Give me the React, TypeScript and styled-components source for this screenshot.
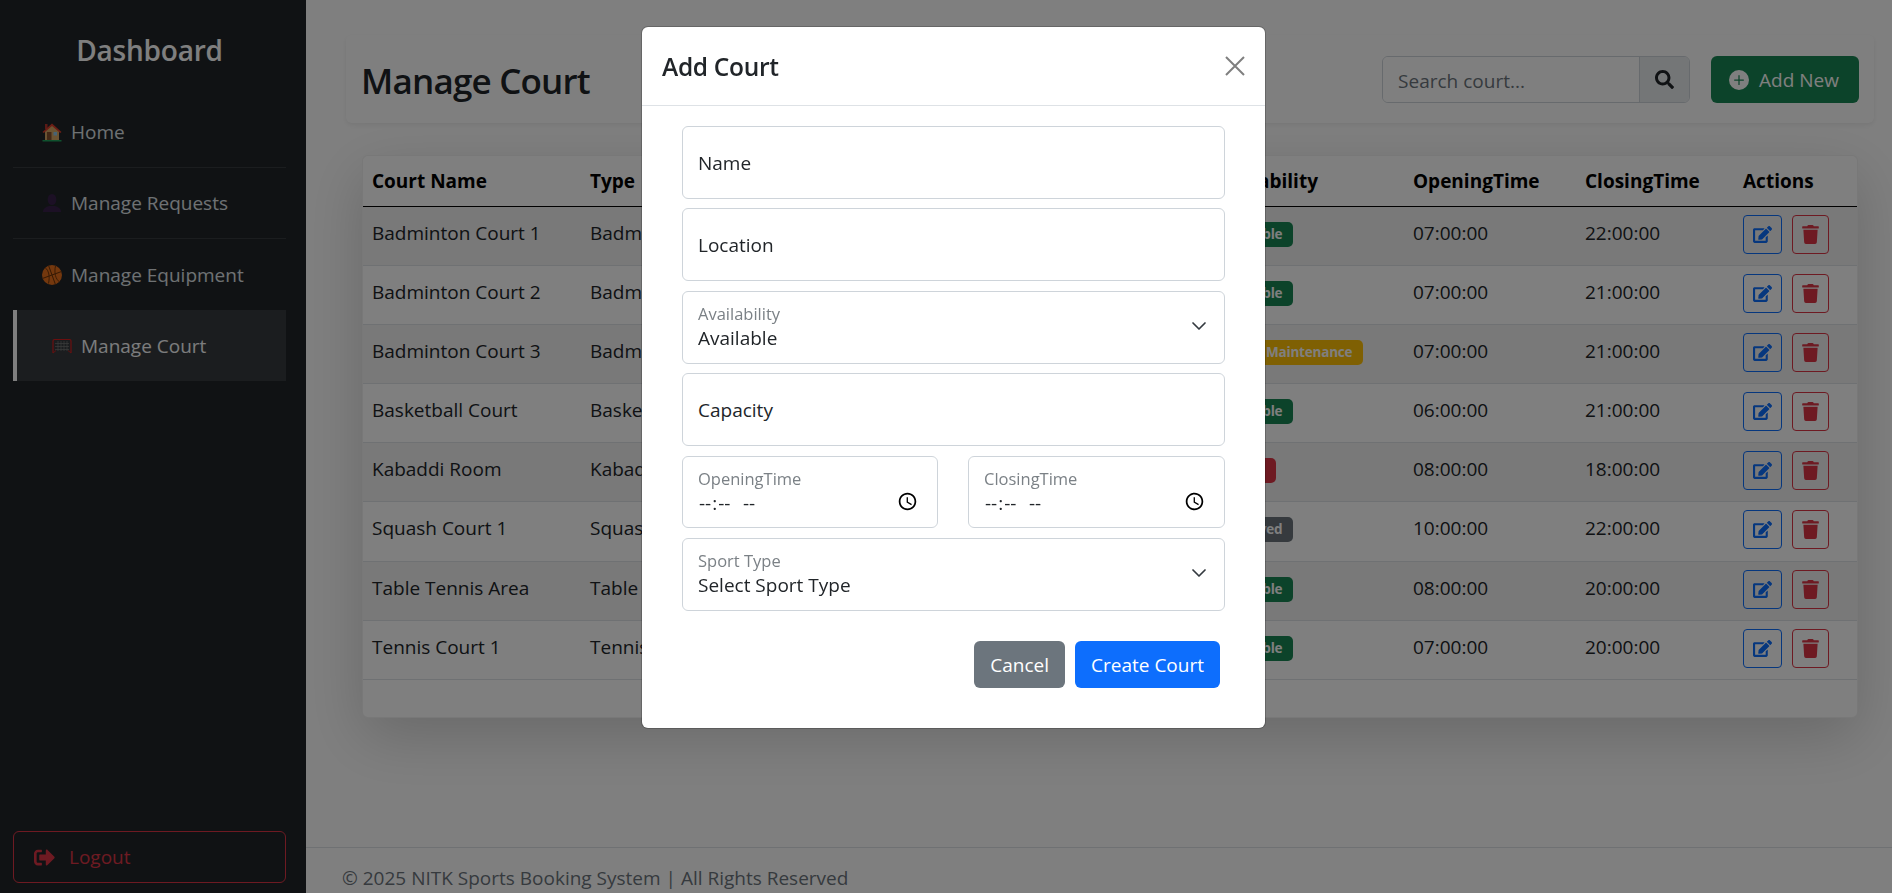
import React, { FC } from "react";
import styled, { createGlobalStyle } from "styled-components";
import { BsPlusCircleFill } from "react-icons/bs";
import { FaEdit, FaSearch, FaSignOutAlt, FaTrash } from "react-icons/fa";

type BadgeKind = "success" | "warning" | "danger" | "secondary";

type Court = {
  name: string;
  type: string;
  status: string;
  kind: BadgeKind;
  opening: string;
  closing: string;
};

const courts: Court[] = [
  { name: "Badminton Court 1", type: "Badminton", status: "Available", kind: "success", opening: "07:00:00", closing: "22:00:00" },
  { name: "Badminton Court 2", type: "Badminton", status: "Available", kind: "success", opening: "07:00:00", closing: "21:00:00" },
  { name: "Badminton Court 3", type: "Badminton", status: "Under Maintenance", kind: "warning", opening: "07:00:00", closing: "21:00:00" },
  { name: "Basketball Court", type: "Basketball", status: "Available", kind: "success", opening: "06:00:00", closing: "21:00:00" },
  { name: "Kabaddi Room", type: "Kabaddi", status: "Closed", kind: "danger", opening: "08:00:00", closing: "18:00:00" },
  { name: "Squash Court 1", type: "Squash", status: "Reserved", kind: "secondary", opening: "10:00:00", closing: "22:00:00" },
  { name: "Table Tennis Area", type: "Table Tennis", status: "Available", kind: "success", opening: "08:00:00", closing: "20:00:00" },
  { name: "Tennis Court 1", type: "Tennis", status: "Available", kind: "success", opening: "07:00:00", closing: "20:00:00" },
];

const badgeColors: Record<BadgeKind, string> = {
  success: "#198754",
  warning: "#ffc107",
  danger: "#dc3545",
  secondary: "#6c757d",
};

const GlobalStyle = createGlobalStyle`
  html, body {
    margin: 0;
    height: 100%;
    overflow: hidden;
  }
  body {
    font-family: "Open Sans", "Noto Sans", sans-serif;
    font-size: 19px;
    color: #212529;
    background: #fff;
  }
  * {
    box-sizing: border-box;
  }
`;

const Page = styled.div`
  display: flex;
  height: 893px;
  overflow: hidden;
`;

const Sidebar = styled.aside`
  flex: 0 0 306px;
  display: flex;
  flex-direction: column;
  padding: 0 20px 10px 13px;
  background: #212529;
`;

const Brand = styled.h1`
  margin: 0;
  height: 97px;
  padding-top: 31px;
  font-size: 28px;
  line-height: 38px;
  font-weight: 600;
  letter-spacing: -0.2px;
  text-align: center;
  color: #fff;
`;

const NavItem = styled.a<{ $active?: boolean }>`
  display: flex;
  align-items: center;
  gap: 9px;
  height: 71px;
  padding-left: ${(p) => (p.$active ? "35px" : "29px")};
  font-size: 19px;
  color: ${(p) => (p.$active ? "#f8f9fa" : "#dee2e6")};
  border-left: ${(p) => (p.$active ? "4px solid #fff" : "0")};
  border-bottom: ${(p) => (p.$active ? "0" : "1px solid rgba(255, 255, 255, 0.1)")};
  background: ${(p) => (p.$active ? "rgba(255, 255, 255, 0.1)" : "transparent")};

  &:nth-of-type(3) {
    border-bottom: 0;
  }
`;

const LogoutButton = styled.button`
  display: flex;
  align-items: center;
  gap: 14px;
  width: 100%;
  height: 52px;
  margin-top: auto;
  padding: 0 0 0 20px;
  font: inherit;
  font-size: 19px;
  color: #dc3545;
  background: transparent;
  border: 1px solid #dc3545;
  border-radius: 6px;
`;

const Main = styled.main`
  flex: 1;
  display: flex;
  flex-direction: column;
  min-width: 0;
`;

const Content = styled.div`
  flex: 1;
  padding: 35px 18px 0 40px;
`;

const TopBar = styled.header`
  display: flex;
  align-items: center;
  justify-content: space-between;
  height: 88px;
  padding: 0 15px 0 15px;
  background: #fff;
  border-radius: 6px;
  box-shadow: 0 2px 5px rgba(0, 0, 0, 0.075);
`;

const PageTitle = styled.h2`
  margin: 0;
  padding-top: 3px;
  font-size: 35px;
  line-height: 46px;
  font-weight: 600;
  letter-spacing: -0.8px;
`;

const TopActions = styled.div`
  display: flex;
  align-items: center;
  gap: 21px;
`;

const SearchGroup = styled.div`
  display: flex;
  width: 308px;
  height: 47px;
  border: 1px solid #ced4da;
  border-radius: 6px;
  overflow: hidden;
`;

const SearchInput = styled.input`
  flex: 1;
  min-width: 0;
  padding: 3px 15px 0;
  font: inherit;
  font-size: 19px;
  border: 0;
  outline: 0;
  background: #fff;

  &::placeholder {
    color: #6c757d;
  }
`;

const SearchAddon = styled.span`
  flex: 0 0 50px;
  display: flex;
  align-items: center;
  justify-content: center;
  font-size: 19px;
  color: #212529;
  background: #e9ecef;
  border-left: 1px solid #ced4da;
`;

const AddButton = styled.button`
  display: flex;
  align-items: center;
  gap: 10px;
  height: 47px;
  padding: 2px 20px 0 18px;
  font: inherit;
  font-size: 19px;
  color: #fff;
  background: #198754;
  border: 0;
  border-radius: 6px;
`;

const TableCard = styled.section`
  margin: 32px 16px 0 16px;
  height: 563px;
  border-radius: 6px;
  background: #fff;
  overflow: hidden;
  border: 1px solid rgba(0, 0, 0, 0.06);
  box-shadow: 0 19px 58px rgba(0, 0, 0, 0.175);
`;

const Table = styled.table`
  width: 100%;
  table-layout: fixed;
  border-collapse: collapse;
`;

const HeadCell = styled.th<{ $width?: number }>`
  width: ${(p) => (p.$width ? `${p.$width}px` : "auto")};
  height: 50px;
  padding: 0 9px;
  font-size: 19px;
  font-weight: 700;
  text-align: left;
  color: #000;
  border-bottom: 1px solid #000;
`;

const Row = styled.tr`
  &:nth-child(odd) td {
    background: rgba(0, 0, 0, 0.05);
  }
`;

const Cell = styled.td`
  height: 59.2px;
  padding: 14px 9px 0;
  vertical-align: top;
  font-size: 19px;
  line-height: 24px;
  white-space: nowrap;
  overflow: hidden;
  border-bottom: 1px solid #dee2e6;
`;

const Badge = styled.span<{ $kind: BadgeKind }>`
  display: inline-block;
  height: 25px;
  padding: 0 11px;
  font-size: 13.5px;
  font-weight: 700;
  line-height: 25px;
  letter-spacing: -0.2px;
  vertical-align: top;
  color: #fff;
  background: ${(p) => badgeColors[p.$kind]};
  border-radius: 5px;
  transform: translateY(1px);
`;

const ActionCell = styled(Cell)`
  padding-top: 8px;
`;

const ActionList = styled.div`
  display: flex;
  gap: 10px;
`;

const IconButton = styled.button<{ $color: string; $width: number }>`
  display: flex;
  align-items: center;
  justify-content: center;
  width: ${(p) => p.$width}px;
  height: 39px;
  padding: 0;
  font-size: 19px;
  color: ${(p) => p.$color};
  background: transparent;
  border: 1px solid ${(p) => p.$color};
  border-radius: 4px;
`;

const Footer = styled.footer`
  flex: 0 0 46px;
  padding: 15px 36px 0;
  font-size: 19px;
  line-height: 30px;
  white-space: nowrap;
  color: #6c757d;
  border-top: 1px solid #dee2e6;
`;

const Backdrop = styled.div`
  position: fixed;
  inset: 0;
  display: flex;
  justify-content: center;
  align-items: flex-start;
  padding: 27px 0 0 15px;
  background: rgba(0, 0, 0, 0.5);
`;

const Modal = styled.div`
  width: 623px;
  height: 701px;
  color: #212529;
  background: #fff;
  border-radius: 6px;
  box-shadow: 0 0 0 1px rgba(0, 0, 0, 0.2);
`;

const ModalHeader = styled.div`
  display: flex;
  align-items: center;
  justify-content: space-between;
  height: 79px;
  padding: 0 20px;
  border-bottom: 1px solid #dee2e6;
`;

const ModalTitle = styled.h5`
  margin: 0;
  font-size: 24.5px;
  font-weight: 600;
  letter-spacing: -0.3px;
`;

const CloseButton = styled.button`
  display: flex;
  width: 20px;
  height: 20px;
  padding: 0;
  color: #7f7f7f;
  background: transparent;
  border: 0;
`;

const ModalForm = styled.form`
  display: flex;
  flex-direction: column;
  gap: 9.6px;
  padding: 20px 40px 0;
`;

const FieldRow = styled.div`
  display: grid;
  grid-template-columns: 256px 257px;
  justify-content: space-between;
`;

const Field = styled.div`
  position: relative;
  height: 72.8px;
`;

const controlStyles = `
  display: block;
  width: 100%;
  height: 100%;
  padding: 30px 15px 8px;
  font-family: inherit;
  font-size: 19px;
  color: #212529;
  background: #fff;
  border: 1px solid #ced4da;
  border-radius: 6px;
  outline: 0;
`;

const TextInput = styled.input`
  ${controlStyles}
`;

const TimeInput = styled.input`
  ${controlStyles}
  padding-top: 31px;
  letter-spacing: 1.2px;

  &::-webkit-datetime-edit-ampm-field {
    margin-left: 8px;
  }

  &::-webkit-calendar-picker-indicator {
    width: 21px;
    height: 21px;
    margin: -4px 4px 0 0;
    padding: 0;
  }
`;

const SelectInput = styled.select`
  ${controlStyles}
  appearance: none;
`;

const FieldLabel = styled.label<{ $floated?: boolean }>`
  position: absolute;
  top: ${(p) => (p.$floated ? "11px" : "25px")};
  left: 16px;
  font-size: ${(p) => (p.$floated ? "16.5px" : "19px")};
  line-height: 24px;
  color: ${(p) => (p.$floated ? "#7b8186" : "#212529")};
  pointer-events: none;
`;

const Chevron = styled.svg`
  position: absolute;
  top: 27px;
  right: 18px;
  width: 16px;
  height: 16px;
  pointer-events: none;
`;

const ModalActions = styled.div`
  display: flex;
  justify-content: flex-end;
  gap: 10px;
  margin-top: 21px;
  padding-right: 5px;
`;

const ActionButton = styled.button<{ $color: string }>`
  height: 47px;
  padding: 0 16px;
  font: inherit;
  font-size: 19px;
  color: #fff;
  background: ${(p) => p.$color};
  border: 0;
  border-radius: 6px;
`;

const HomeEmoji: FC = () => (
  <svg width="20" height="20" viewBox="0 0 20 20">
    <rect x="3" y="2" width="2.5" height="5" fill="#b7352c" />
    <path d="M3 9 10 3l7 6v9H3z" fill="#d7a966" />
    <path d="M0.5 10 10 1.5 19.500 10l-1.300 1L10 4 1.800 11z" fill="#d83b2a" />
    <rect x="5" y="10" width="4.500" height="8" fill="#86532f" />
    <rect x="11.500" y="10" width="3.500" height="3.500" fill="#8fc6e8" />
    <rect x="0.500" y="18" width="19" height="1.500" fill="#1fa35c" />
  </svg>
);

const BustEmoji: FC = () => (
  <svg width="20" height="20" viewBox="0 0 20 20">
    <ellipse cx="10" cy="6.500" rx="4.300" ry="5.500" fill="#38204b" />
    <path d="M1 19c0-3.500 3-5 6-6h6c3 1 6 2.500 6 6z" fill="#38204b" />
  </svg>
);

const BallEmoji: FC = () => (
  <svg width="20" height="20" viewBox="0 0 20 20">
    <circle cx="10" cy="10" r="10" fill="#e8701c" />
    <g fill="none" stroke="#6a3208" strokeWidth="0.900">
      <path d="M10 0v20M0 10h20" transform="rotate(-20 10 10)" />
      <path d="M3 2.500c4 3 5 9 3.500 16" />
      <path d="M13.500 1c-1.500 7 0 13 4 16" />
    </g>
  </svg>
);

const GoalEmoji: FC = () => (
  <svg width="20" height="20" viewBox="0 0 20 20">
    <g stroke="#7a7a7a" strokeWidth="0.700">
      <path d="M3 7.500h14M3 10.500h14M3 13.500h14M6 5v10M9 5v10M12 5v10M15 5v10" />
    </g>
    <path d="M1 17V5q0-1.500 1.500-1.500h15Q19 3.500 19 5v12" fill="none" stroke="#d81e1e" strokeWidth="1.200" />
    <path d="M1 17l3-2.500M19 17l-3-2.500" stroke="#d81e1e" strokeWidth="0.800" />
  </svg>
);

const SelectChevron: FC = () => (
  <Chevron viewBox="0 0 16 16">
    <path d="m2 5 6 6 6-6" fill="none" stroke="#343a40" strokeWidth="1.700" strokeLinecap="round" strokeLinejoin="round" />
  </Chevron>
);

const App: FC = () => (
  <>
    <GlobalStyle />
    <Page>
      <Sidebar>
        <Brand>Dashboard</Brand>
        <nav>
          <NavItem><HomeEmoji /> Home</NavItem>
          <NavItem><BustEmoji /> Manage Requests</NavItem>
          <NavItem><BallEmoji /> Manage Equipment</NavItem>
          <NavItem $active><GoalEmoji /> Manage Court</NavItem>
        </nav>
        <LogoutButton><FaSignOutAlt size={21} /> Logout</LogoutButton>
      </Sidebar>
      <Main>
        <Content>
          <TopBar>
            <PageTitle>Manage Court</PageTitle>
            <TopActions>
              <SearchGroup>
                <SearchInput placeholder="Search court..." />
                <SearchAddon><FaSearch /></SearchAddon>
              </SearchGroup>
              <AddButton><BsPlusCircleFill size={20} /> Add New</AddButton>
            </TopActions>
          </TopBar>
          <TableCard>
            <Table>
              <thead>
                <tr>
                  <HeadCell $width={218}>Court Name</HeadCell>
                  <HeadCell $width={621}>Type</HeadCell>
                  <HeadCell $width={202}>Availability</HeadCell>
                  <HeadCell $width={172}>OpeningTime</HeadCell>
                  <HeadCell $width={158}>ClosingTime</HeadCell>
                  <HeadCell>Actions</HeadCell>
                </tr>
              </thead>
              <tbody>
                {courts.map((court) => (
                  <Row key={court.name}>
                    <Cell>{court.name}</Cell>
                    <Cell>{court.type}</Cell>
                    <Cell><Badge $kind={court.kind}>{court.status}</Badge></Cell>
                    <Cell>{court.opening}</Cell>
                    <Cell>{court.closing}</Cell>
                    <ActionCell>
                      <ActionList>
                        <IconButton $color="#0d6efd" $width={39}><FaEdit /></IconButton>
                        <IconButton $color="#dc3545" $width={37}><FaTrash /></IconButton>
                      </ActionList>
                    </ActionCell>
                  </Row>
                ))}
              </tbody>
            </Table>
          </TableCard>
        </Content>
        <Footer>© 2025 NITK Sports Booking System | All Rights Reserved</Footer>
      </Main>
    </Page>
    <Backdrop>
      <Modal>
        <ModalHeader>
          <ModalTitle>Add Court</ModalTitle>
          <CloseButton type="button" aria-label="Close">
            <svg width="20" height="20" viewBox="0 0 20 20">
              <path d="M1 1l18 18M19 1 1 19" stroke="currentColor" strokeWidth="2" fill="none" />
            </svg>
          </CloseButton>
        </ModalHeader>
        <ModalForm>
          <Field>
            <TextInput id="name" />
            <FieldLabel htmlFor="name">Name</FieldLabel>
          </Field>
          <Field>
            <TextInput id="location" />
            <FieldLabel htmlFor="location">Location</FieldLabel>
          </Field>
          <Field>
            <SelectInput id="availability" defaultValue="Available">
              <option>Available</option>
              <option>Under Maintenance</option>
              <option>Closed</option>
              <option>Reserved</option>
            </SelectInput>
            <FieldLabel $floated htmlFor="availability">Availability</FieldLabel>
            <SelectChevron />
          </Field>
          <Field>
            <TextInput id="capacity" />
            <FieldLabel htmlFor="capacity">Capacity</FieldLabel>
          </Field>
          <FieldRow>
            <Field>
              <TimeInput id="opening" type="time" />
              <FieldLabel $floated htmlFor="opening">OpeningTime</FieldLabel>
            </Field>
            <Field>
              <TimeInput id="closing" type="time" />
              <FieldLabel $floated htmlFor="closing">ClosingTime</FieldLabel>
            </Field>
          </FieldRow>
          <Field>
            <SelectInput id="sport" defaultValue="Select Sport Type">
              <option>Select Sport Type</option>
              <option>Badminton</option>
              <option>Basketball</option>
              <option>Kabaddi</option>
              <option>Squash</option>
              <option>Table Tennis</option>
              <option>Tennis</option>
            </SelectInput>
            <FieldLabel $floated htmlFor="sport">Sport Type</FieldLabel>
            <SelectChevron />
          </Field>
          <ModalActions>
            <ActionButton type="button" $color="#6c757d">Cancel</ActionButton>
            <ActionButton type="button" $color="#0d6efd">Create Court</ActionButton>
          </ModalActions>
        </ModalForm>
      </Modal>
    </Backdrop>
  </>
);

export default App;
